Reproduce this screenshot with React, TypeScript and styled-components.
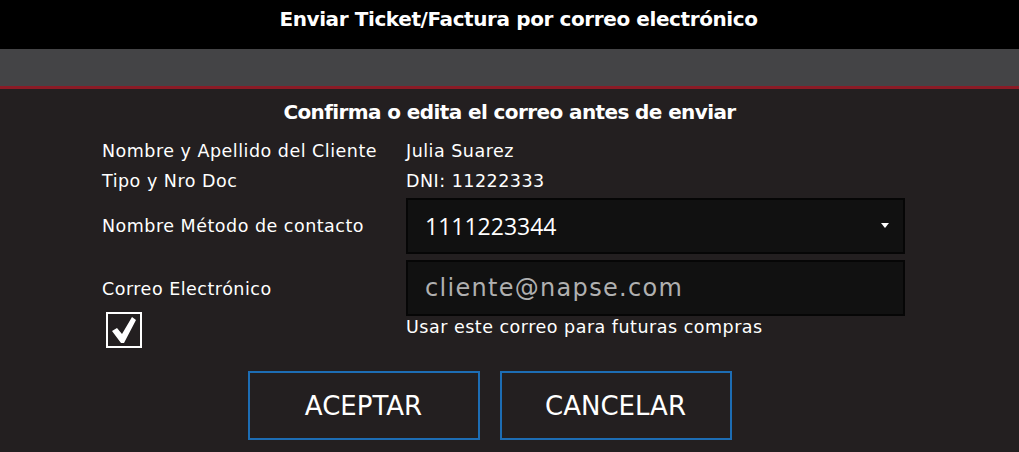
import React from "react";
import styled, { createGlobalStyle } from "styled-components";

const Global = createGlobalStyle`
  html, body { margin: 0; padding: 0; background: #231f20; }
  body { width: 1019px; height: 452px; overflow: hidden; }
  * { box-sizing: border-box; }
`;

const Page = styled.div`
  width: 1019px;
  height: 452px;
  display: flex;
  flex-direction: column;
  background: #231f20;
  font-family: "DejaVu Sans", "Open Sans", sans-serif;
  color: #ffffff;
`;

const TitleBar = styled.header`
  height: 49px;
  background: #000000;
  display: flex;
  justify-content: center;
  padding: 6px 0 0 18px;
`;

const Title = styled.h1`
  margin: 0;
  font-family: "DejaVu Sans", sans-serif;
  font-weight: 700;
  font-size: 20px;
  line-height: 26px;
  letter-spacing: -0.4px;
`;

const SubBar = styled.div`
  height: 40px;
  background: #444446;
  border-bottom: 3px solid #8b1b26;
`;

const Body = styled.main`
  flex: 1;
  display: flex;
  flex-direction: column;
  padding-top: 9px;
`;

const Subtitle = styled.h2`
  margin: 0;
  text-align: center;
  font-family: "DejaVu Sans", sans-serif;
  font-weight: 700;
  font-size: 20px;
  line-height: 28px;
  letter-spacing: -0.6px;
`;

const Form = styled.div`
  display: grid;
  grid-template-columns: 304px 499px;
  padding-left: 102px;
  margin-top: 10px;
  align-items: center;
`;

const Label = styled.div<{ $h: number; $pt?: number }>`
  height: ${(p) => p.$h}px;
  padding-top: ${(p) => p.$pt ?? 0}px;
  display: flex;
  align-items: center;
  font-size: 17.5px;
  letter-spacing: 0.5px;
  line-height: 20px;
`;

const Value = styled.div<{ $h: number }>`
  height: ${(p) => p.$h}px;
  display: flex;
  align-items: center;
  font-size: 17.5px;
  letter-spacing: 0.5px;
`;

const Field = styled.div<{ $gap?: number }>`
  height: 56px;
  margin-top: ${(p) => p.$gap ?? 0}px;
  background: #111111;
  border: 2px solid #060606;
  display: flex;
  align-items: center;
  justify-content: space-between;
  padding: 0 14px 0 17px;
`;

const FieldText = styled.span<{ $muted?: boolean }>`
  color: ${(p) => (p.$muted ? "#b0b0b0" : "#ffffff")};
  font-family: ${(p) => (p.$muted ? '"DejaVu Sans", sans-serif' : '"Open Sans", sans-serif')};
  font-size: ${(p) => (p.$muted ? 24 : 23)}px;
  letter-spacing: ${(p) => (p.$muted ? 1.3 : 0)}px;
`;

const Caret = styled.span`
  width: 0;
  height: 0;
  border-left: 4px solid transparent;
  border-right: 4px solid transparent;
  border-top: 5px solid #ffffff;
`;

const CheckCell = styled.div`
  height: 38px;
  display: flex;
  align-items: flex-start;
  margin-top: -4px;
  padding-left: 4px;
`;

const CheckBox = styled.div`
  width: 36px;
  height: 36px;
  border: 2px solid #ffffff;
  display: flex;
  align-items: center;
  justify-content: center;
`;

const Hint = styled.div`
  height: 24px;
  align-self: start;
  font-size: 17.5px;
  letter-spacing: 0.5px;
  line-height: 22px;
`;

const Actions = styled.div`
  display: flex;
  justify-content: center;
  gap: 20px;
  padding-right: 40px;
  margin-top: 21px;
`;

const Button = styled.button`
  width: 232px;
  height: 69px;
  background: transparent;
  border: 2px solid #1d6db4;
  color: #ffffff;
  font-family: "DejaVu Sans", sans-serif;
  font-size: 26px;
  padding: 0;
`;

export default function App() {
  return (
    <>
      <Global />
      <Page>
        <TitleBar>
          <Title>Enviar Ticket/Factura por correo electrónico</Title>
        </TitleBar>
        <SubBar />
        <Body>
          <Subtitle>Confirma o edita el correo antes de enviar</Subtitle>
          <Form>
            <Label $h={30}>Nombre y Apellido del Cliente</Label>
            <Value $h={30}>Julia Suarez</Value>
            <Label $h={30}>Tipo y Nro Doc</Label>
            <Value $h={30}>DNI: 11222333</Value>
            <Label $h={58} $pt={2}>Nombre Método de contacto</Label>
            <Field $gap={1}>
              <FieldText>1111223344</FieldText>
              <Caret />
            </Field>
            <Label $h={62} $pt={8}>Correo Electrónico</Label>
            <Field $gap={5}>
              <FieldText $muted>cliente@napse.com</FieldText>
            </Field>
            <CheckCell>
              <CheckBox>
                <svg width="26" height="28" viewBox="0 0 26 28">
                  <path d="M1 15 L6 12 L11 18 L21 1 L25 4 L13 27 L10 27 Z" fill="#ffffff" />
                </svg>
              </CheckBox>
            </CheckCell>
            <Hint>Usar este correo para futuras compras</Hint>
          </Form>
          <Actions>
            <Button>ACEPTAR</Button>
            <Button>CANCELAR</Button>
          </Actions>
        </Body>
      </Page>
    </>
  );
}
